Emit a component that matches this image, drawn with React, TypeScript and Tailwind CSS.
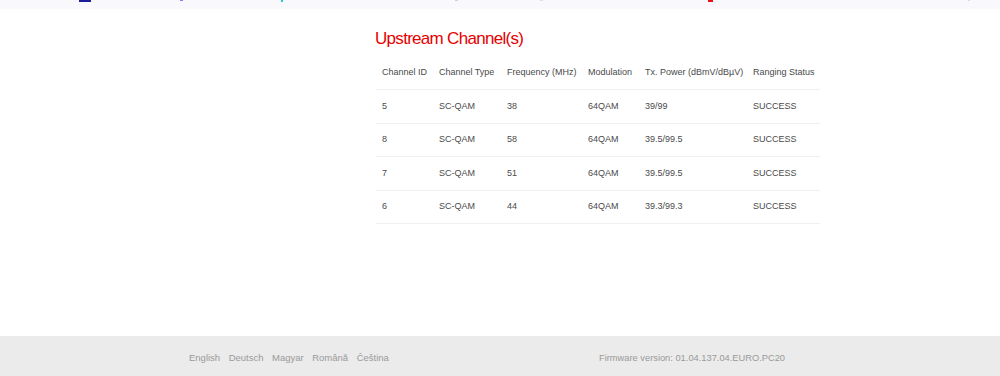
import React from 'react';

const rows = [
  { id: '5', type: 'SC-QAM', freq: '38', mod: '64QAM', power: '39/99', status: 'SUCCESS' },
  { id: '8', type: 'SC-QAM', freq: '58', mod: '64QAM', power: '39.5/99.5', status: 'SUCCESS' },
  { id: '7', type: 'SC-QAM', freq: '51', mod: '64QAM', power: '39.5/99.5', status: 'SUCCESS' },
  { id: '6', type: 'SC-QAM', freq: '44', mod: '64QAM', power: '39.3/99.3', status: 'SUCCESS' },
];

const headers = ['Channel ID', 'Channel Type', 'Frequency (MHz)', 'Modulation', 'Tx. Power (dBmV/dBµV)', 'Ranging Status'];
const languages = ['English', 'Deutsch', 'Magyar', 'Română', 'Čeština'];

const gridCols = 'grid grid-cols-[57px_68px_81px_57px_108px_73px]';

export default function App() {
  return (
    <div className="w-[1000px] h-[376px] flex flex-col bg-white font-['Liberation_Sans',Arial,sans-serif] overflow-hidden">
      {/* cut-off nav strip */}
      <div className="relative h-[9px] bg-[#f8f8fd] shrink-0">
        <span className="absolute left-[79px] top-0 w-[12px] h-[2px] bg-[#1c1c9a]" />
        <span className="absolute left-[180px] top-0 w-[3px] h-[1px] bg-[#8c7cf0]" />
        <span className="absolute left-[281px] top-0 w-[2px] h-[2px] bg-[#28c6d6]" />
        <span className="absolute left-[455px] top-0 w-[3px] h-[1px] bg-[#cfcfd6]" />
        <span className="absolute left-[540px] top-0 w-[3px] h-[1px] bg-[#dcdce2]" />
        <span className="absolute left-[708px] top-0 w-[5px] h-[2px] bg-[#e81010]" />
        <span className="absolute left-[968px] top-0 w-[2px] h-[1px] bg-[#dcdce2]" />
      </div>

      <main className="flex-1">
        <div className="w-[640px] mx-auto flex">
          <div className="w-[195px] shrink-0" />
          <div className="flex-1">
            <h1 className="mt-[20px] text-[17px] leading-[20px] tracking-[-0.7px] text-[#e60000]">
              Upstream Channel(s)
            </h1>
            <div className="mt-[8px] ml-[1px] w-[444px] text-[9px] text-[#4a4a4a]">
              <div className={`${gridCols} h-[33px] items-center border-b border-[#f0f0f0]`}>
                {headers.map(h => (
                  <div key={h} className="pl-[6px] whitespace-nowrap">{h}</div>
                ))}
              </div>
              {rows.map(r => (
                <div key={r.id} className={`${gridCols} h-[33.5px] items-center border-b border-[#f0f0f0]`}>
                  <div className="pl-[6px]">{r.id}</div>
                  <div className="pl-[6px]">{r.type}</div>
                  <div className="pl-[6px]">{r.freq}</div>
                  <div className="pl-[6px]">{r.mod}</div>
                  <div className="pl-[6px]">{r.power}</div>
                  <div className="pl-[6px]">{r.status}</div>
                </div>
              ))}
            </div>
          </div>
        </div>
      </main>

      <footer className="h-[40px] bg-[#ebebeb] shrink-0">
        <div className="w-[640px] mx-auto h-full flex items-center pt-[5px] pl-[9px] text-[9.5px] text-[#9a9a9a]">
          <div className="w-[410px] flex gap-[8.5px]">
            {languages.map(l => (
              <span key={l}>{l}</span>
            ))}
          </div>
          <span className="text-[9.3px]">Firmware version: 01.04.137.04.EURO.PC20</span>
        </div>
      </footer>
    </div>
  );
}
